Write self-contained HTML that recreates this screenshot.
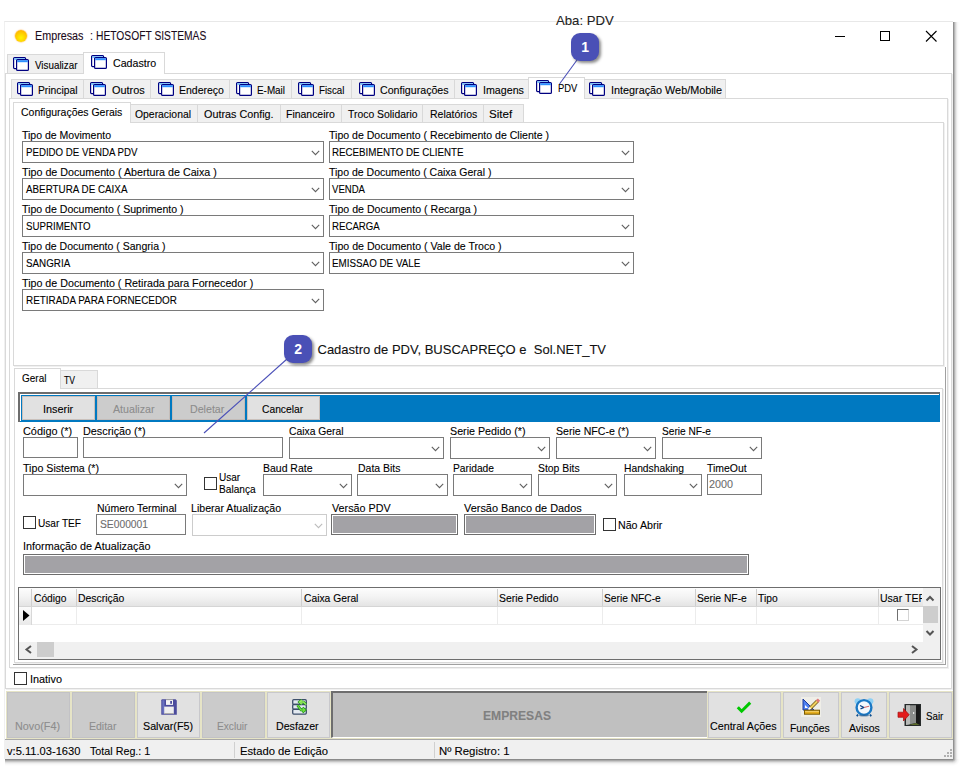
<!DOCTYPE html>
<html><head><meta charset="utf-8"><style>
html,body{margin:0;padding:0;width:962px;height:769px;overflow:hidden;background:#fff;}
body{position:relative;font-family:"Liberation Sans",sans-serif;}
div{position:absolute;box-sizing:border-box;}
.t{white-space:pre;transform-origin:0 0;font-family:"Liberation Sans",sans-serif;-webkit-text-stroke:0.1px currentColor;}
svg{position:absolute;overflow:visible;}
</style></head><body>
<div style="left:4px;top:21px;width:949px;height:738px;background:#fff;border-top:1px solid #e8e8e8;border-left:1px solid #f0f0f0;"></div>
<div style="left:953px;top:22px;width:7px;height:737px;background:linear-gradient(to right,rgba(0,0,0,.50),rgba(0,0,0,.36) 1px,rgba(0,0,0,.22) 2px,rgba(0,0,0,.12) 3px,rgba(0,0,0,.05) 4px,rgba(0,0,0,.015) 5px,rgba(0,0,0,0));"></div>
<div style="left:953px;top:759px;width:7px;height:7px;background:radial-gradient(circle at 0 0,rgba(0,0,0,.5),rgba(0,0,0,.3) 1.5px,rgba(0,0,0,.12) 3px,rgba(0,0,0,.03) 5px,rgba(0,0,0,0) 7px);"></div>
<div style="left:5px;top:759px;width:948px;height:7px;background:linear-gradient(to bottom,rgba(0,0,0,.52),rgba(0,0,0,.40) 1px,rgba(0,0,0,.28) 2px,rgba(0,0,0,.16) 3px,rgba(0,0,0,.08) 4px,rgba(0,0,0,.03) 5px,rgba(0,0,0,0));"></div>
<div style="left:14.5px;top:29.5px;width:12.5px;height:12.5px;border-radius:50%;background:radial-gradient(circle at 50% 65%,#fff600 0%,#ffd000 45%,#ffa000 100%);box-shadow:0 0 1px 0.5px rgba(255,150,0,0.5);"></div>
<div class="t" style="left:34.5px;top:29px;font-size:12.5px;line-height:14.5px;color:#1a0a1a;transform:scaleX(0.8619);">Empresas</div>
<div class="t" style="left:90px;top:29px;font-size:12.5px;line-height:14.5px;color:#1a0a1a;transform:scaleX(0.8638);">:</div>
<div class="t" style="left:96.3px;top:29px;font-size:12.5px;line-height:14.5px;color:#1a0a1a;transform:scaleX(0.8215);">HETOSOFT SISTEMAS</div>
<div style="left:835px;top:36px;width:10px;height:1px;background:#000;"></div>
<div style="left:880px;top:31px;width:10px;height:10px;border:1px solid #000;"></div>
<svg style="left:0;top:0" width="1" height="1"><path d="M926 31 L936.5 41.5 M936.5 31 L926 41.5" stroke="#000" stroke-width="1.1"/></svg>
<div class="t" style="left:556px;top:13px;font-size:13px;line-height:15px;color:#222;transform:scaleX(1.0108);">Aba: PDV</div>
<div style="left:5px;top:73px;width:947px;height:616px;background:#fff;border:1px solid #d9d9d9;box-shadow:1px 1px 0 #f0f0f0;"></div>
<div style="left:7px;top:54px;width:77px;height:20px;background:#f0f0f0;border:1px solid #d9d9d9;"></div>
<div style="left:83px;top:52px;width:82px;height:22px;background:#fff;border:1px solid #d9d9d9;border-bottom:none;"></div>
<svg style="left:13px;top:57px" width="16" height="14" viewBox="0 0 16 14">
<rect x="0.6" y="0.6" width="12" height="11" rx="1" fill="#fff" stroke="#000080" stroke-width="1.2"/>
<rect x="1.2" y="1.3" width="10.8" height="1.6" fill="#6fc3ff"/>
<rect x="3.6" y="2.6" width="11.8" height="10.8" rx="1" fill="#fff" stroke="#000080" stroke-width="1.2"/>
<rect x="4.2" y="3.2" width="10.6" height="2" fill="#2e8fff"/>
</svg>
<svg style="left:91px;top:55px" width="16" height="14" viewBox="0 0 16 14">
<rect x="0.6" y="0.6" width="12" height="11" rx="1" fill="#fff" stroke="#000080" stroke-width="1.2"/>
<rect x="1.2" y="1.3" width="10.8" height="1.6" fill="#6fc3ff"/>
<rect x="3.6" y="2.6" width="11.8" height="10.8" rx="1" fill="#fff" stroke="#000080" stroke-width="1.2"/>
<rect x="4.2" y="3.2" width="10.6" height="2" fill="#2e8fff"/>
</svg>
<div class="t" style="left:35px;top:59px;font-size:11px;line-height:13px;color:#000;transform:scaleX(0.8929);">Visualizar</div>
<div class="t" style="left:112.8px;top:57px;font-size:11px;line-height:13px;color:#000;transform:scaleX(0.9679);">Cadastro</div>
<div style="left:9px;top:98px;width:939px;height:570px;background:#fff;border:1px solid #d9d9d9;box-shadow:1px 1px 0 #f0f0f0;"></div>
<div style="left:11px;top:79px;width:73px;height:20px;background:#f0f0f0;border:1px solid #d9d9d9;"></div>
<div style="left:83px;top:79px;width:68px;height:20px;background:#f0f0f0;border:1px solid #d9d9d9;"></div>
<div style="left:150px;top:79px;width:80px;height:20px;background:#f0f0f0;border:1px solid #d9d9d9;"></div>
<div style="left:229px;top:79px;width:63px;height:20px;background:#f0f0f0;border:1px solid #d9d9d9;"></div>
<div style="left:291px;top:79px;width:61px;height:20px;background:#f0f0f0;border:1px solid #d9d9d9;"></div>
<div style="left:351px;top:79px;width:104px;height:20px;background:#f0f0f0;border:1px solid #d9d9d9;"></div>
<div style="left:454px;top:79px;width:75px;height:20px;background:#f0f0f0;border:1px solid #d9d9d9;"></div>
<div style="left:584px;top:79px;width:142px;height:20px;background:#f0f0f0;border:1px solid #d9d9d9;"></div>
<svg style="left:16.5px;top:82px" width="16" height="14" viewBox="0 0 16 14">
<rect x="0.6" y="0.6" width="12" height="11" rx="1" fill="#fff" stroke="#000080" stroke-width="1.2"/>
<rect x="1.2" y="1.3" width="10.8" height="1.6" fill="#6fc3ff"/>
<rect x="3.6" y="2.6" width="11.8" height="10.8" rx="1" fill="#fff" stroke="#000080" stroke-width="1.2"/>
<rect x="4.2" y="3.2" width="10.6" height="2" fill="#2e8fff"/>
</svg>
<div class="t" style="left:38px;top:84px;font-size:11px;line-height:13px;color:#000;transform:scaleX(0.9364);">Principal</div>
<svg style="left:90px;top:82px" width="16" height="14" viewBox="0 0 16 14">
<rect x="0.6" y="0.6" width="12" height="11" rx="1" fill="#fff" stroke="#000080" stroke-width="1.2"/>
<rect x="1.2" y="1.3" width="10.8" height="1.6" fill="#6fc3ff"/>
<rect x="3.6" y="2.6" width="11.8" height="10.8" rx="1" fill="#fff" stroke="#000080" stroke-width="1.2"/>
<rect x="4.2" y="3.2" width="10.6" height="2" fill="#2e8fff"/>
</svg>
<div class="t" style="left:111.8px;top:84px;font-size:11px;line-height:13px;color:#000;transform:scaleX(0.9906);">Outros</div>
<svg style="left:157.5px;top:82px" width="16" height="14" viewBox="0 0 16 14">
<rect x="0.6" y="0.6" width="12" height="11" rx="1" fill="#fff" stroke="#000080" stroke-width="1.2"/>
<rect x="1.2" y="1.3" width="10.8" height="1.6" fill="#6fc3ff"/>
<rect x="3.6" y="2.6" width="11.8" height="10.8" rx="1" fill="#fff" stroke="#000080" stroke-width="1.2"/>
<rect x="4.2" y="3.2" width="10.6" height="2" fill="#2e8fff"/>
</svg>
<div class="t" style="left:178.8px;top:84px;font-size:11px;line-height:13px;color:#000;transform:scaleX(0.9535);">Endereço</div>
<svg style="left:236.2px;top:82px" width="16" height="14" viewBox="0 0 16 14">
<rect x="0.6" y="0.6" width="12" height="11" rx="1" fill="#fff" stroke="#000080" stroke-width="1.2"/>
<rect x="1.2" y="1.3" width="10.8" height="1.6" fill="#6fc3ff"/>
<rect x="3.6" y="2.6" width="11.8" height="10.8" rx="1" fill="#fff" stroke="#000080" stroke-width="1.2"/>
<rect x="4.2" y="3.2" width="10.6" height="2" fill="#2e8fff"/>
</svg>
<div class="t" style="left:257.4px;top:84px;font-size:11px;line-height:13px;color:#000;transform:scaleX(0.8983);">E-Mail</div>
<svg style="left:298px;top:82px" width="16" height="14" viewBox="0 0 16 14">
<rect x="0.6" y="0.6" width="12" height="11" rx="1" fill="#fff" stroke="#000080" stroke-width="1.2"/>
<rect x="1.2" y="1.3" width="10.8" height="1.6" fill="#6fc3ff"/>
<rect x="3.6" y="2.6" width="11.8" height="10.8" rx="1" fill="#fff" stroke="#000080" stroke-width="1.2"/>
<rect x="4.2" y="3.2" width="10.6" height="2" fill="#2e8fff"/>
</svg>
<div class="t" style="left:319.3px;top:84px;font-size:11px;line-height:13px;color:#000;transform:scaleX(0.8843);">Fiscal</div>
<svg style="left:358.5px;top:82px" width="16" height="14" viewBox="0 0 16 14">
<rect x="0.6" y="0.6" width="12" height="11" rx="1" fill="#fff" stroke="#000080" stroke-width="1.2"/>
<rect x="1.2" y="1.3" width="10.8" height="1.6" fill="#6fc3ff"/>
<rect x="3.6" y="2.6" width="11.8" height="10.8" rx="1" fill="#fff" stroke="#000080" stroke-width="1.2"/>
<rect x="4.2" y="3.2" width="10.6" height="2" fill="#2e8fff"/>
</svg>
<div class="t" style="left:379.7px;top:84px;font-size:11px;line-height:13px;color:#000;transform:scaleX(0.9671);">Configurações</div>
<svg style="left:461.2px;top:82px" width="16" height="14" viewBox="0 0 16 14">
<rect x="0.6" y="0.6" width="12" height="11" rx="1" fill="#fff" stroke="#000080" stroke-width="1.2"/>
<rect x="1.2" y="1.3" width="10.8" height="1.6" fill="#6fc3ff"/>
<rect x="3.6" y="2.6" width="11.8" height="10.8" rx="1" fill="#fff" stroke="#000080" stroke-width="1.2"/>
<rect x="4.2" y="3.2" width="10.6" height="2" fill="#2e8fff"/>
</svg>
<div class="t" style="left:482.7px;top:84px;font-size:11px;line-height:13px;color:#000;transform:scaleX(0.9694);">Imagens</div>
<svg style="left:589px;top:82px" width="16" height="14" viewBox="0 0 16 14">
<rect x="0.6" y="0.6" width="12" height="11" rx="1" fill="#fff" stroke="#000080" stroke-width="1.2"/>
<rect x="1.2" y="1.3" width="10.8" height="1.6" fill="#6fc3ff"/>
<rect x="3.6" y="2.6" width="11.8" height="10.8" rx="1" fill="#fff" stroke="#000080" stroke-width="1.2"/>
<rect x="4.2" y="3.2" width="10.6" height="2" fill="#2e8fff"/>
</svg>
<div class="t" style="left:611px;top:84px;font-size:11px;line-height:13px;color:#000;transform:scaleX(0.9830);">Integração Web/Mobile</div>
<div style="left:528px;top:77px;width:57px;height:22px;background:#fff;border:1px solid #d9d9d9;border-bottom:none;"></div>
<svg style="left:536px;top:80px" width="16" height="14" viewBox="0 0 16 14">
<rect x="0.6" y="0.6" width="12" height="11" rx="1" fill="#fff" stroke="#000080" stroke-width="1.2"/>
<rect x="1.2" y="1.3" width="10.8" height="1.6" fill="#6fc3ff"/>
<rect x="3.6" y="2.6" width="11.8" height="10.8" rx="1" fill="#fff" stroke="#000080" stroke-width="1.2"/>
<rect x="4.2" y="3.2" width="10.6" height="2" fill="#2e8fff"/>
</svg>
<div class="t" style="left:557.9px;top:81.5px;font-size:11px;line-height:13px;color:#000;transform:scaleX(0.8533);">PDV</div>
<div style="left:13px;top:122px;width:931px;height:244px;background:#fff;border:1px solid #d9d9d9;box-shadow:1px 1px 0 #f0f0f0;"></div>
<div style="left:130px;top:104px;width:68px;height:19px;background:#f0f0f0;border:1px solid #d9d9d9;"></div>
<div class="t" style="left:135px;top:108px;font-size:11px;line-height:13px;color:#000;transform:scaleX(0.9441);">Operacional</div>
<div style="left:197px;top:104px;width:84px;height:19px;background:#f0f0f0;border:1px solid #d9d9d9;"></div>
<div class="t" style="left:203.7px;top:108px;font-size:11px;line-height:13px;color:#000;transform:scaleX(0.9814);">Outras Config.</div>
<div style="left:280px;top:104px;width:62px;height:19px;background:#f0f0f0;border:1px solid #d9d9d9;"></div>
<div class="t" style="left:286.2px;top:108px;font-size:11px;line-height:13px;color:#000;transform:scaleX(0.9502);">Financeiro</div>
<div style="left:341px;top:104px;width:82px;height:19px;background:#f0f0f0;border:1px solid #d9d9d9;"></div>
<div class="t" style="left:348px;top:108px;font-size:11px;line-height:13px;color:#000;transform:scaleX(0.9447);">Troco Solidario</div>
<div style="left:422px;top:104px;width:62px;height:19px;background:#f0f0f0;border:1px solid #d9d9d9;"></div>
<div class="t" style="left:429.5px;top:108px;font-size:11px;line-height:13px;color:#000;transform:scaleX(0.9551);">Relatórios</div>
<div style="left:483px;top:104px;width:41px;height:19px;background:#f0f0f0;border:1px solid #d9d9d9;"></div>
<div class="t" style="left:489.3px;top:108px;font-size:11px;line-height:13px;color:#000;transform:scaleX(1.0540);">Sitef</div>
<div style="left:13px;top:102px;width:118px;height:21px;background:#fff;border:1px solid #d9d9d9;border-bottom:none;"></div>
<div class="t" style="left:21.2px;top:106px;font-size:11px;line-height:13px;color:#000;transform:scaleX(0.9522);">Configurações Gerais</div>
<div style="left:22px;top:141px;width:302px;height:22px;background:#fff;border:1px solid #7a7a7a;"></div>
<svg style="left:0;top:0" width="1" height="1"><polyline points="311.8,150.8 315.5,154.60000000000002 319.2,150.8" fill="none" stroke="#606060" stroke-width="1.1"/></svg>
<div class="t" style="left:22.3px;top:129px;font-size:11px;line-height:13px;color:#000;transform:scaleX(0.9556);">Tipo de Movimento</div>
<div class="t" style="left:25.5px;top:146px;font-size:11px;line-height:13px;color:#000;transform:scaleX(0.8809);">PEDIDO DE VENDA PDV</div>
<div style="left:329px;top:141px;width:305px;height:22px;background:#fff;border:1px solid #7a7a7a;"></div>
<svg style="left:0;top:0" width="1" height="1"><polyline points="621.8,150.8 625.5,154.60000000000002 629.2,150.8" fill="none" stroke="#606060" stroke-width="1.1"/></svg>
<div class="t" style="left:329.2px;top:129px;font-size:11px;line-height:13px;color:#000;transform:scaleX(0.9587);">Tipo de Documento ( Recebimento de Cliente )</div>
<div class="t" style="left:332.2px;top:146px;font-size:11px;line-height:13px;color:#000;transform:scaleX(0.8866);">RECEBIMENTO DE CLIENTE</div>
<div style="left:22px;top:178px;width:302px;height:22px;background:#fff;border:1px solid #7a7a7a;"></div>
<svg style="left:0;top:0" width="1" height="1"><polyline points="311.8,187.8 315.5,191.60000000000002 319.2,187.8" fill="none" stroke="#606060" stroke-width="1.1"/></svg>
<div class="t" style="left:22.3px;top:166px;font-size:11px;line-height:13px;color:#000;transform:scaleX(0.9734);">Tipo de Documento ( Abertura de Caixa )</div>
<div class="t" style="left:25.5px;top:183px;font-size:11px;line-height:13px;color:#000;transform:scaleX(0.8939);">ABERTURA DE CAIXA</div>
<div style="left:329px;top:178px;width:305px;height:22px;background:#fff;border:1px solid #7a7a7a;"></div>
<svg style="left:0;top:0" width="1" height="1"><polyline points="621.8,187.8 625.5,191.60000000000002 629.2,187.8" fill="none" stroke="#606060" stroke-width="1.1"/></svg>
<div class="t" style="left:329.2px;top:166px;font-size:11px;line-height:13px;color:#000;transform:scaleX(0.9544);">Tipo de Documento ( Caixa Geral )</div>
<div class="t" style="left:332.2px;top:183px;font-size:11px;line-height:13px;color:#000;transform:scaleX(0.8707);">VENDA</div>
<div style="left:22px;top:215px;width:302px;height:22px;background:#fff;border:1px solid #7a7a7a;"></div>
<svg style="left:0;top:0" width="1" height="1"><polyline points="311.8,224.8 315.5,228.60000000000002 319.2,224.8" fill="none" stroke="#606060" stroke-width="1.1"/></svg>
<div class="t" style="left:22.3px;top:203px;font-size:11px;line-height:13px;color:#000;transform:scaleX(0.9600);">Tipo de Documento ( Suprimento )</div>
<div class="t" style="left:25.5px;top:220px;font-size:11px;line-height:13px;color:#000;transform:scaleX(0.8819);">SUPRIMENTO</div>
<div style="left:329px;top:215px;width:305px;height:22px;background:#fff;border:1px solid #7a7a7a;"></div>
<svg style="left:0;top:0" width="1" height="1"><polyline points="621.8,224.8 625.5,228.60000000000002 629.2,224.8" fill="none" stroke="#606060" stroke-width="1.1"/></svg>
<div class="t" style="left:329.2px;top:203px;font-size:11px;line-height:13px;color:#000;transform:scaleX(0.9632);">Tipo de Documento ( Recarga )</div>
<div class="t" style="left:332.2px;top:220px;font-size:11px;line-height:13px;color:#000;transform:scaleX(0.8787);">RECARGA</div>
<div style="left:22px;top:252px;width:302px;height:22px;background:#fff;border:1px solid #7a7a7a;"></div>
<svg style="left:0;top:0" width="1" height="1"><polyline points="311.8,261.8 315.5,265.6 319.2,261.8" fill="none" stroke="#606060" stroke-width="1.1"/></svg>
<div class="t" style="left:22.3px;top:240px;font-size:11px;line-height:13px;color:#000;transform:scaleX(0.9560);">Tipo de Documento ( Sangria )</div>
<div class="t" style="left:25.5px;top:257px;font-size:11px;line-height:13px;color:#000;transform:scaleX(0.8927);">SANGRIA</div>
<div style="left:329px;top:252px;width:305px;height:22px;background:#fff;border:1px solid #7a7a7a;"></div>
<svg style="left:0;top:0" width="1" height="1"><polyline points="621.8,261.8 625.5,265.6 629.2,261.8" fill="none" stroke="#606060" stroke-width="1.1"/></svg>
<div class="t" style="left:329.2px;top:240px;font-size:11px;line-height:13px;color:#000;transform:scaleX(0.9635);">Tipo de Documento ( Vale de Troco )</div>
<div class="t" style="left:332.2px;top:257px;font-size:11px;line-height:13px;color:#000;transform:scaleX(0.8935);">EMISSAO DE VALE</div>
<div style="left:22px;top:289px;width:302px;height:22px;background:#fff;border:1px solid #7a7a7a;"></div>
<svg style="left:0;top:0" width="1" height="1"><polyline points="311.8,298.8 315.5,302.6 319.2,298.8" fill="none" stroke="#606060" stroke-width="1.1"/></svg>
<div class="t" style="left:22.3px;top:277px;font-size:11px;line-height:13px;color:#000;transform:scaleX(0.9717);">Tipo de Documento ( Retirada para Fornecedor )</div>
<div class="t" style="left:25.5px;top:294px;font-size:11px;line-height:13px;color:#000;transform:scaleX(0.8989);">RETIRADA PARA FORNECEDOR</div>
<div style="left:13px;top:664px;width:933px;height:1px;background:#a0a0a0;"></div>
<div style="left:945px;top:367px;width:1px;height:298px;background:#a0a0a0;"></div>
<div style="left:14px;top:388px;width:929px;height:275px;background:#fff;border:1px solid #d9d9d9;box-shadow:1px 1px 0 #f0f0f0;"></div>
<div style="left:60px;top:370px;width:38px;height:19px;background:#f0f0f0;border:1px solid #d9d9d9;"></div>
<div style="left:14px;top:368px;width:47px;height:21px;background:#fff;border:1px solid #d9d9d9;border-bottom:none;"></div>
<div class="t" style="left:21.8px;top:372px;font-size:11px;line-height:13px;color:#000;transform:scaleX(0.9071);">Geral</div>
<div class="t" style="left:64.4px;top:374px;font-size:11px;line-height:13px;color:#000;transform:scaleX(0.7826);">TV</div>
<div style="left:18px;top:392px;width:922px;height:30px;background:#0079c1;border-top:2px solid #6d6d6d;border-left:2px solid #6d6d6d;"></div>
<div style="left:20px;top:394px;width:919px;height:1px;background:#fff;"></div>
<div style="left:20px;top:394px;width:1px;height:27px;background:#fff;"></div>
<div style="left:22px;top:396px;width:73px;height:24px;background:#e1e1e1;border:1px solid #c9c0bb;"></div>
<div class="t" style="left:42.6px;top:402.5px;font-size:11px;line-height:13px;color:#000;transform:scaleX(0.9882);">Inserir</div>
<div style="left:97px;top:396px;width:73px;height:24px;background:#cccccc;border:1px solid #c4bcb8;"></div>
<div class="t" style="left:112.5px;top:402.5px;font-size:11px;line-height:13px;color:#8d8d8d;transform:scaleX(0.9697);">Atualizar</div>
<div style="left:172px;top:396px;width:73px;height:24px;background:#cccccc;border:1px solid #c4bcb8;"></div>
<div class="t" style="left:190.4px;top:402.5px;font-size:11px;line-height:13px;color:#8d8d8d;transform:scaleX(0.9673);">Deletar</div>
<div style="left:247px;top:396px;width:73px;height:24px;background:#e1e1e1;border:1px solid #c9c0bb;"></div>
<div class="t" style="left:262.3px;top:402.5px;font-size:11px;line-height:13px;color:#000;transform:scaleX(0.9336);">Cancelar</div>
<div class="t" style="left:23px;top:425px;font-size:11px;line-height:13px;color:#000;transform:scaleX(0.9895);">Código (*)</div>
<div style="left:23px;top:437px;width:55px;height:21px;background:#fff;border:1px solid #7a7a7a;"></div>
<div class="t" style="left:82.5px;top:425px;font-size:11px;line-height:13px;color:#000;transform:scaleX(0.9832);">Descrição (*)</div>
<div style="left:83px;top:437px;width:200px;height:21px;background:#fff;border:1px solid #7a7a7a;"></div>
<div class="t" style="left:288.6px;top:425px;font-size:11px;line-height:13px;color:#000;transform:scaleX(0.9401);">Caixa Geral</div>
<div style="left:289px;top:437px;width:155px;height:22px;background:#fff;border:1px solid #7a7a7a;"></div>
<svg style="left:0;top:0" width="1" height="1"><polyline points="431.8,446.8 435.5,450.6 439.2,446.8" fill="none" stroke="#606060" stroke-width="1.1"/></svg>
<div class="t" style="left:450px;top:425px;font-size:11px;line-height:13px;color:#000;transform:scaleX(0.9736);">Serie Pedido (*)</div>
<div style="left:450px;top:437px;width:100px;height:22px;background:#fff;border:1px solid #7a7a7a;"></div>
<svg style="left:0;top:0" width="1" height="1"><polyline points="537.8,446.8 541.5,450.6 545.2,446.8" fill="none" stroke="#606060" stroke-width="1.1"/></svg>
<div class="t" style="left:556px;top:425px;font-size:11px;line-height:13px;color:#000;transform:scaleX(0.9632);">Serie NFC-e (*)</div>
<div style="left:556px;top:437px;width:100px;height:22px;background:#fff;border:1px solid #7a7a7a;"></div>
<svg style="left:0;top:0" width="1" height="1"><polyline points="643.8,446.8 647.5,450.6 651.2,446.8" fill="none" stroke="#606060" stroke-width="1.1"/></svg>
<div class="t" style="left:662px;top:425px;font-size:11px;line-height:13px;color:#000;transform:scaleX(0.9214);">Serie NF-e</div>
<div style="left:662px;top:437px;width:100px;height:22px;background:#fff;border:1px solid #7a7a7a;"></div>
<svg style="left:0;top:0" width="1" height="1"><polyline points="749.8,446.8 753.5,450.6 757.2,446.8" fill="none" stroke="#606060" stroke-width="1.1"/></svg>
<div class="t" style="left:23px;top:462px;font-size:11px;line-height:13px;color:#000;transform:scaleX(0.9688);">Tipo Sistema (*)</div>
<div style="left:23px;top:474px;width:164px;height:22px;background:#fff;border:1px solid #7a7a7a;"></div>
<svg style="left:0;top:0" width="1" height="1"><polyline points="174.8,483.8 178.5,487.6 182.2,483.8" fill="none" stroke="#606060" stroke-width="1.1"/></svg>
<div style="left:204px;top:477px;width:13px;height:13px;background:#fff;border:1px solid #333;"></div>
<div class="t" style="left:219.4px;top:471px;font-size:11px;line-height:13px;color:#000;transform:scaleX(0.9128);">Usar</div>
<div class="t" style="left:219.4px;top:483px;font-size:11px;line-height:13px;color:#000;transform:scaleX(0.9207);">Balança</div>
<div class="t" style="left:263px;top:462px;font-size:11px;line-height:13px;color:#000;transform:scaleX(0.9523);">Baud Rate</div>
<div style="left:263px;top:474px;width:89px;height:22px;background:#fff;border:1px solid #7a7a7a;"></div>
<svg style="left:0;top:0" width="1" height="1"><polyline points="339.8,483.8 343.5,487.6 347.2,483.8" fill="none" stroke="#606060" stroke-width="1.1"/></svg>
<div class="t" style="left:357.5px;top:462px;font-size:11px;line-height:13px;color:#000;transform:scaleX(0.9523);">Data Bits</div>
<div style="left:357px;top:474px;width:91px;height:22px;background:#fff;border:1px solid #7a7a7a;"></div>
<svg style="left:0;top:0" width="1" height="1"><polyline points="435.8,483.8 439.5,487.6 443.2,483.8" fill="none" stroke="#606060" stroke-width="1.1"/></svg>
<div class="t" style="left:453px;top:462px;font-size:11px;line-height:13px;color:#000;transform:scaleX(0.9311);">Paridade</div>
<div style="left:453px;top:474px;width:79px;height:22px;background:#fff;border:1px solid #7a7a7a;"></div>
<svg style="left:0;top:0" width="1" height="1"><polyline points="519.8,483.8 523.5,487.6 527.2,483.8" fill="none" stroke="#606060" stroke-width="1.1"/></svg>
<div class="t" style="left:538px;top:462px;font-size:11px;line-height:13px;color:#000;transform:scaleX(0.9450);">Stop Bits</div>
<div style="left:538px;top:474px;width:79px;height:22px;background:#fff;border:1px solid #7a7a7a;"></div>
<svg style="left:0;top:0" width="1" height="1"><polyline points="604.8,483.8 608.5,487.6 612.2,483.8" fill="none" stroke="#606060" stroke-width="1.1"/></svg>
<div class="t" style="left:623.7px;top:462px;font-size:11px;line-height:13px;color:#000;transform:scaleX(0.9344);">Handshaking</div>
<div style="left:624px;top:474px;width:78px;height:22px;background:#fff;border:1px solid #7a7a7a;"></div>
<svg style="left:0;top:0" width="1" height="1"><polyline points="689.8,483.8 693.5,487.6 697.2,483.8" fill="none" stroke="#606060" stroke-width="1.1"/></svg>
<div class="t" style="left:706.8px;top:462px;font-size:11px;line-height:13px;color:#000;transform:scaleX(0.9481);">TimeOut</div>
<div style="left:707px;top:474px;width:55px;height:21px;background:#fff;border:1px solid #7a7a7a;"></div>
<div class="t" style="left:709px;top:478px;font-size:11px;line-height:13px;color:#6d6d6d;transform:scaleX(0.9808);">2000</div>
<div style="left:23px;top:516px;width:13px;height:13px;background:#fff;border:1px solid #333;"></div>
<div class="t" style="left:38.3px;top:517px;font-size:11px;line-height:13px;color:#000;transform:scaleX(0.9181);">Usar TEF</div>
<div class="t" style="left:96.5px;top:502px;font-size:11px;line-height:13px;color:#000;transform:scaleX(0.9529);">Número Terminal</div>
<div style="left:96px;top:514px;width:90px;height:21px;background:#fff;border:1px solid #7a7a7a;"></div>
<div class="t" style="left:100px;top:518px;font-size:11px;line-height:13px;color:#6d6d6d;transform:scaleX(0.9342);">SE000001</div>
<div class="t" style="left:191.3px;top:502px;font-size:11px;line-height:13px;color:#000;transform:scaleX(0.9632);">Liberar Atualização</div>
<div style="left:192px;top:514px;width:135px;height:22px;background:#fff;border:1px solid #cccccc;"></div>
<svg style="left:0;top:0" width="1" height="1"><polyline points="314.8,523.8 318.5,527.5999999999999 322.2,523.8" fill="none" stroke="#bcbcbc" stroke-width="1.1"/></svg>
<div class="t" style="left:332.4px;top:501.5px;font-size:11px;line-height:13px;color:#000;transform:scaleX(0.9780);">Versão PDV</div>
<div style="left:331px;top:514px;width:127px;height:21px;background:#a3a2a6;border:1px solid #6d6d6d;box-shadow:inset 0 0 0 1px #fff;"></div>
<div class="t" style="left:464px;top:501.5px;font-size:11px;line-height:13px;color:#000;transform:scaleX(0.9921);">Versão Banco de Dados</div>
<div style="left:464px;top:514px;width:132px;height:21px;background:#a3a2a6;border:1px solid #6d6d6d;box-shadow:inset 0 0 0 1px #fff;"></div>
<div style="left:603px;top:518px;width:13px;height:13px;background:#fff;border:1px solid #333;"></div>
<div class="t" style="left:618px;top:519px;font-size:11px;line-height:13px;color:#000;transform:scaleX(0.9686);">Não Abrir</div>
<div class="t" style="left:23px;top:540px;font-size:11px;line-height:13px;color:#000;transform:scaleX(0.9828);">Informação de Atualização</div>
<div style="left:23px;top:554px;width:726px;height:21px;background:#a3a2a6;border:1px solid #6d6d6d;box-shadow:inset 0 0 0 1px #fff;"></div>
<div style="left:18px;top:587px;width:923px;height:73px;background:#fff;border:1px solid #6d6d6d;"></div>
<div style="left:19px;top:588px;width:904px;height:19px;background:linear-gradient(#fdfdfd,#f3f3f3 50%,#e4e4e4);border-bottom:1px solid #d5d5d5;"></div>
<div style="left:19px;top:607px;width:12px;height:18px;background:linear-gradient(#fbfbfb,#e9e9e9);"></div>
<div style="left:31px;top:624px;width:892px;height:1px;background:#ececec;"></div>
<div style="left:31px;top:589px;width:1px;height:17px;background:#cfcfcf;"></div>
<div style="left:76px;top:589px;width:1px;height:17px;background:#cfcfcf;"></div>
<div style="left:76px;top:607px;width:1px;height:17px;background:#ececec;"></div>
<div style="left:301px;top:589px;width:1px;height:17px;background:#cfcfcf;"></div>
<div style="left:301px;top:607px;width:1px;height:17px;background:#ececec;"></div>
<div style="left:497px;top:589px;width:1px;height:17px;background:#cfcfcf;"></div>
<div style="left:497px;top:607px;width:1px;height:17px;background:#ececec;"></div>
<div style="left:602px;top:589px;width:1px;height:17px;background:#cfcfcf;"></div>
<div style="left:602px;top:607px;width:1px;height:17px;background:#ececec;"></div>
<div style="left:695px;top:589px;width:1px;height:17px;background:#cfcfcf;"></div>
<div style="left:695px;top:607px;width:1px;height:17px;background:#ececec;"></div>
<div style="left:756px;top:589px;width:1px;height:17px;background:#cfcfcf;"></div>
<div style="left:756px;top:607px;width:1px;height:17px;background:#ececec;"></div>
<div style="left:878px;top:589px;width:1px;height:17px;background:#cfcfcf;"></div>
<div style="left:878px;top:607px;width:1px;height:17px;background:#ececec;"></div>
<div style="left:31px;top:607px;width:1px;height:18px;background:#d8d8d8;"></div>
<svg style="left:0;top:0" width="1" height="1"><polygon points="23,610 29.5,615.5 23,621" fill="#000"/></svg>
<div class="t" style="left:33.8px;top:592px;font-size:11px;line-height:13px;color:#000;transform:scaleX(0.9323);">Código</div>
<div class="t" style="left:78.3px;top:592px;font-size:11px;line-height:13px;color:#000;transform:scaleX(0.9488);">Descrição</div>
<div class="t" style="left:304px;top:592px;font-size:11px;line-height:13px;color:#000;transform:scaleX(0.9367);">Caixa Geral</div>
<div class="t" style="left:499px;top:592px;font-size:11px;line-height:13px;color:#000;transform:scaleX(0.9431);">Serie Pedido</div>
<div class="t" style="left:604.2px;top:592px;font-size:11px;line-height:13px;color:#000;transform:scaleX(0.9293);">Serie NFC-e</div>
<div class="t" style="left:697.4px;top:592px;font-size:11px;line-height:13px;color:#000;transform:scaleX(0.9365);">Serie NF-e</div>
<div class="t" style="left:758.4px;top:592px;font-size:11px;line-height:13px;color:#000;transform:scaleX(0.9338);">Tipo</div>
<div style="left:879px;top:588px;width:43px;height:18px;overflow:hidden;"><div class="t" style="left:1.4px;top:4px;font-size:11px;line-height:13px;color:#000;transform:scaleX(0.957);">Usar TEF</div></div>
<div style="left:897px;top:609px;width:12px;height:12px;background:#fff;border:1px solid #d4d4d4;border-top-color:#707070;border-left-color:#707070;"></div>
<div style="left:923px;top:588px;width:17px;height:54px;background:#f0f0f0;"></div>
<div style="left:923px;top:606px;width:15px;height:17px;background:#cdcdcd;"></div>
<div style="left:19px;top:642px;width:921px;height:17px;background:#f0f0f0;"></div>
<div style="left:37px;top:642px;width:17px;height:15px;background:#cdcdcd;"></div>
<svg style="left:0;top:0" width="1" height="1" fill="none" stroke="#555" stroke-width="2"><polyline points="31,646 26.5,649.5 31,653"/><polyline points="912,646 916.5,649.5 912,653"/><polyline points="926.5,600.5 930,597 933.5,600.5"/><polyline points="926.5,631 930,634.5 933.5,631"/></svg>
<div style="left:14px;top:672px;width:13px;height:13px;background:#fff;border:1px solid #333;"></div>
<div class="t" style="left:30px;top:673px;font-size:11px;line-height:13px;color:#000;transform:scaleX(0.9874);">Inativo</div>
<div style="left:6px;top:691px;width:947px;height:48px;background:#e6e4c6;"></div>
<div style="left:7px;top:692px;width:63px;height:46px;background:#cbcbcb;border:1px solid #c2c2c6;"></div>
<div class="t" style="left:15.2px;top:719.5px;font-size:11px;line-height:13px;color:#8d8d8d;transform:scaleX(0.9838);">Novo(F4)</div>
<div style="left:72px;top:692px;width:63px;height:46px;background:#cbcbcb;border:1px solid #c2c2c6;"></div>
<div class="t" style="left:89.4px;top:719.5px;font-size:11px;line-height:13px;color:#8d8d8d;transform:scaleX(0.9535);">Editar</div>
<div style="left:137px;top:692px;width:63px;height:46px;background:#e1e1e1;border:1px solid #c8c8cc;"></div>
<div class="t" style="left:143px;top:719.5px;font-size:11px;line-height:13px;color:#000;transform:scaleX(0.9739);">Salvar(F5)</div>
<div style="left:202px;top:692px;width:63px;height:46px;background:#cbcbcb;border:1px solid #c2c2c6;"></div>
<div class="t" style="left:217.4px;top:719.5px;font-size:11px;line-height:13px;color:#8d8d8d;transform:scaleX(0.9211);">Excluir</div>
<div style="left:267px;top:692px;width:63px;height:46px;background:#e1e1e1;border:1px solid #c8c8cc;"></div>
<div class="t" style="left:276.3px;top:719.5px;font-size:11px;line-height:13px;color:#000;transform:scaleX(0.9678);">Desfazer</div>
<div style="left:331px;top:691px;width:376px;height:47px;background:#c0c0c0;border-top:2px solid #6e6e6e;border-left:2px solid #6e6e6e;border-bottom:1px solid #fff;"></div>
<div class="t" style="left:483px;top:709px;font-size:12px;line-height:14px;color:#808080;font-weight:bold;transform:scaleX(1.0097);">EMPRESAS</div>
<div style="left:708px;top:692px;width:73px;height:46px;background:#e1e1e1;border:1px solid #c8c8cc;"></div>
<div class="t" style="left:710.2px;top:720px;font-size:11px;line-height:13px;color:#000;transform:scaleX(0.9727);">Central Ações</div>
<div style="left:783px;top:692px;width:56px;height:46px;background:#e1e1e1;border:1px solid #c8c8cc;"></div>
<div class="t" style="left:790.3px;top:722px;font-size:11px;line-height:13px;color:#000;transform:scaleX(0.9434);">Funções</div>
<div style="left:841px;top:692px;width:46px;height:46px;background:#e1e1e1;border:1px solid #c8c8cc;"></div>
<div class="t" style="left:848.6px;top:722px;font-size:11px;line-height:13px;color:#000;transform:scaleX(0.9565);">Avisos</div>
<div style="left:889px;top:692px;width:63px;height:46px;background:#e1e1e1;border:1px solid #c8c8cc;"></div>
<div class="t" style="left:925.7px;top:710px;font-size:11px;line-height:13px;color:#000;transform:scaleX(0.8844);">Sair</div>
<svg style="left:161px;top:699px" width="16" height="16" viewBox="0 0 16 16">
<path d="M0.3 1.2 Q0.3 0.2 1.3 0.2 H14.6 L15.8 1.4 V15.8 H0.3 Z" fill="#4b4b9c"/>
<rect x="1.3" y="1.2" width="2.2" height="13.5" fill="#6a72c0"/>
<rect x="5" y="0.3" width="7" height="5.6" fill="#f4f4f4"/><rect x="5" y="0.3" width="7" height="0.8" fill="#8a8a8a"/>
<rect x="9.2" y="2" width="1.8" height="2.8" fill="#4b4b9c"/>
<rect x="3.2" y="7.6" width="9.6" height="7.4" fill="#eeeeee"/><rect x="3.2" y="14.2" width="9.6" height="0.9" fill="#999"/>
</svg>
<svg style="left:292px;top:699px" width="15" height="16" viewBox="0 0 15 16">
<rect x="0.7" y="0.7" width="13.6" height="4.6" rx="1" fill="#e3e9f0" stroke="#3d4f6a" stroke-width="1.3"/>
<rect x="0.7" y="5.5" width="13.6" height="4.6" rx="1" fill="#e3e9f0" stroke="#3d4f6a" stroke-width="1.3"/>
<rect x="0.7" y="10.3" width="13.6" height="4.8" rx="1" fill="#e3e9f0" stroke="#3d4f6a" stroke-width="1.3"/>
<path d="M14 5.5 L11.5 3 L8.5 3 M9.8 1 L7.4 3 L9.8 5.2" fill="none" stroke="#1a8a1a" stroke-width="2.6"/>
<path d="M14 5.5 L11.5 3 L8.5 3 M9.8 1 L7.4 3 L9.8 5.2" fill="none" stroke="#9cf060" stroke-width="1.3"/>
<path d="M5.5 6.2 L9 11 L12 11 M10.5 8.8 L13 11 L10.5 13.4" fill="none" stroke="#1a8a1a" stroke-width="2.6"/>
<path d="M5.5 6.2 L9 11 L12 11 M10.5 8.8 L13 11 L10.5 13.4" fill="none" stroke="#70e040" stroke-width="1.3"/>
</svg>
<svg style="left:0;top:0" width="1" height="1"><polyline points="737.8,707.3 741.6,711.2 750.2,702.6" fill="none" stroke="#00c800" stroke-width="3"/></svg>
<svg style="left:801px;top:697px" width="20" height="20" viewBox="0 0 20 20">
<rect x="0" y="0" width="20" height="20" fill="#efeee8"/>
<path d="M2 2 L2 13 L13 13 Z" fill="#4d7ff0" stroke="#1d3a9a" stroke-width="1"/><path d="M4 8 L4 11 L7 11 Z" fill="#fff"/>
<path d="M9 11.5 L16.5 4" stroke="#6a5010" stroke-width="3.6"/><path d="M9 11.5 L16.5 4" stroke="#f0d060" stroke-width="2.2"/>
<path d="M16 4.5 L18 2.6" stroke="#e07878" stroke-width="3.2"/><path d="M7.6 12.6 L9.4 10.8" stroke="#fff" stroke-width="2"/>
<rect x="3.5" y="13.2" width="15" height="4" fill="#e8b020" stroke="#7a5a00" stroke-width="1"/>
<path d="M5 14 V15 M7 14 V15 M9 14 V15 M11 14 V15 M13 14 V15 M15 14 V15 M17 14 V15" stroke="#fff4c0" stroke-width="0.8"/>
</svg>
<svg style="left:854px;top:697px" width="20" height="20" viewBox="0 0 20 20">
<ellipse cx="3.8" cy="4.2" rx="3.2" ry="3" fill="#8ed0f4"/><ellipse cx="16.2" cy="4.2" rx="3.2" ry="3" fill="#8ed0f4"/>
<path d="M4 17.5 L2.8 19.2 M16 17.5 L17.2 19.2" stroke="#0d4f90" stroke-width="1.8"/>
<circle cx="10" cy="10.5" r="7.4" fill="#f4f8fc" stroke="#1a78c4" stroke-width="2.4"/>
<path d="M10 10.5 L6 8.5 M10 10.5 L6.5 11.8" stroke="#0d3f80" stroke-width="1.3"/><path d="M10 10.5 L15.2 9.2" stroke="#d05050" stroke-width="0.9"/>
<ellipse cx="10" cy="18.6" rx="5" ry="1" fill="#2a5a8a" opacity="0.6"/>
</svg>
<svg style="left:897px;top:704px" width="25" height="22" viewBox="0 0 25 22">
<rect x="7.5" y="0" width="16.5" height="22" fill="#262a2a"/>
<path d="M9 1.2 L19 1.2 L19 19 L9 21 Z" fill="#8a8c8a"/><path d="M9 1.2 L13 1.2 L13 20.2 L9 21 Z" fill="#b8bab8"/>
<path d="M19 1.2 L22.8 1.2 L22.8 21 L19 19 Z" fill="#181818"/><path d="M12 21 L19 19 L22.8 21 Z" fill="#5c6a2a"/>
<rect x="16" y="8" width="1.2" height="2" fill="#e8e8e8"/>
<path d="M1 8.2 H6.5 V4.5 L12.2 10.8 L6.5 17 V13.3 H1 Z" fill="#e41c1c" stroke="#a01010" stroke-width="0.7"/>
</svg>
<div style="left:5px;top:739px;width:948px;height:20px;background:#f0f0f0;border-top:1px solid #a8a8a8;"></div>
<div style="left:234px;top:742px;width:1px;height:16px;background:#d0d0d0;"></div>
<div style="left:434px;top:742px;width:1px;height:16px;background:#d0d0d0;"></div>
<div class="t" style="left:7.3px;top:745px;font-size:11px;line-height:13px;color:#000;transform:scaleX(1.0114);">v:5.11.03-1630</div>
<div class="t" style="left:90.3px;top:745px;font-size:11px;line-height:13px;color:#000;transform:scaleX(0.9764);">Total Reg.: 1</div>
<div class="t" style="left:239.5px;top:745px;font-size:11px;line-height:13px;color:#000;transform:scaleX(1.0217);">Estado de Edição</div>
<div class="t" style="left:439.4px;top:745px;font-size:11px;line-height:13px;color:#000;transform:scaleX(1.0351);">Nº Registro: 1</div>
<div style="left:950px;top:749px;width:2px;height:2px;background:#b0b0b0;"></div>
<div style="left:947px;top:752px;width:2px;height:2px;background:#b0b0b0;"></div>
<div style="left:950px;top:752px;width:2px;height:2px;background:#b0b0b0;"></div>
<div style="left:944px;top:755px;width:2px;height:2px;background:#b0b0b0;"></div>
<div style="left:947px;top:755px;width:2px;height:2px;background:#b0b0b0;"></div>
<div style="left:950px;top:755px;width:2px;height:2px;background:#b0b0b0;"></div>
<svg style="left:0;top:0" width="1" height="1"><line x1="577" y1="60" x2="559.5" y2="84" stroke="#4b50b8" stroke-width="1.1"/><line x1="287" y1="359" x2="204" y2="433" stroke="#4b50b8" stroke-width="1.1"/></svg>
<div style="left:571px;top:33px;width:28px;height:28px;border-radius:9px;background:#4a50b6;box-shadow:2px 2px 3px rgba(0,0,0,0.45);"></div>
<div class="t" style="left:581.2px;top:39px;font-size:14px;line-height:16px;color:#fff;font-weight:bold;-webkit-text-stroke:0;">1</div>
<div style="left:284px;top:335px;width:28px;height:28px;border-radius:9px;background:#4a50b6;box-shadow:2px 2px 3px rgba(0,0,0,0.45);"></div>
<div class="t" style="left:294.2px;top:341px;font-size:14px;line-height:16px;color:#fff;font-weight:bold;-webkit-text-stroke:0;">2</div>
<div class="t" style="left:317.5px;top:342px;font-size:13px;line-height:15px;color:#111;">Cadastro de PDV, BUSCAPREÇO e  Sol.NET_TV</div>
</body></html>
